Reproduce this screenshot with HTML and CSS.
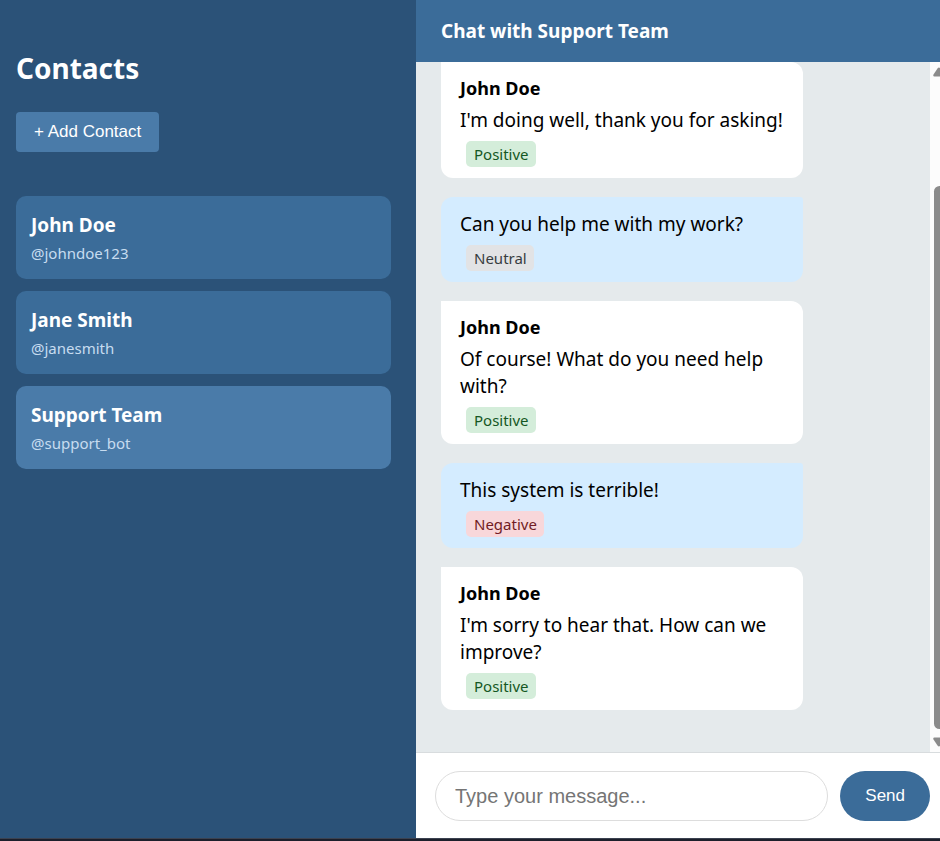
FILE: index.html
```html
<!DOCTYPE html>
<html lang="en">
<head>
<meta charset="utf-8">
<meta name="viewport" content="width=device-width, initial-scale=1">
<title>Chat with Support Team</title>
<link rel="stylesheet" href="styles.css">
</head>
<body>
<div class="app">
  <aside class="sidebar">
    <h1 class="sidebar-title">Contacts</h1>
    <button class="add-contact" type="button">+ Add Contact</button>
    <nav class="contacts">
      <button class="contact" type="button"><span class="contact-name">John Doe</span><span class="contact-handle">@johndoe123</span></button>
      <button class="contact" type="button"><span class="contact-name">Jane Smith</span><span class="contact-handle">@janesmith</span></button>
      <button class="contact active" type="button"><span class="contact-name">Support Team</span><span class="contact-handle">@support_bot</span></button>
    </nav>
  </aside>
  <main class="chat">
    <header class="chat-header"><h2 class="chat-title">Chat with Support Team</h2></header>
    <div class="chat-body">
      <div class="messages">
        <article class="message received">
          <strong class="sender">John Doe</strong>
          <p class="text">I'm doing well, thank you for asking!</p>
          <span class="badge positive">Positive</span>
        </article>
        <article class="message sent">
          <p class="text">Can you help me with my work?</p>
          <span class="badge neutral">Neutral</span>
        </article>
        <article class="message received">
          <strong class="sender">John Doe</strong>
          <p class="text">Of course! What do you need help with?</p>
          <span class="badge positive">Positive</span>
        </article>
        <article class="message sent">
          <p class="text">This system is terrible!</p>
          <span class="badge negative">Negative</span>
        </article>
        <article class="message received">
          <strong class="sender">John Doe</strong>
          <p class="text">I'm sorry to hear that. How can we improve?</p>
          <span class="badge positive">Positive</span>
        </article>
      </div>
      <div class="scrollbar" aria-hidden="true">
        <svg class="arrow" viewBox="0 0 12 10"><path d="M1.5 9.5Q-.3 9.500 .5 7.500L4.500 1.500Q6-.5 7.500 1.500L11.500 7.500Q12.300 9.500 10.500 9.500Z"/></svg>
        <div class="track"><div class="thumb"></div></div>
        <svg class="arrow" viewBox="0 0 12 10"><path d="M1.500.5Q-.3.5 .5 2.500L4.500 8.500Q6 10.500 7.500 8.500L11.500 2.500Q12.300.5 10.500.5Z"/></svg>
      </div>
    </div>
    <form class="composer">
      <input class="composer-input" type="text" placeholder="Type your message..." aria-label="Message">
      <button class="send" type="button">Send</button>
    </form>
  </main>
</div>
<footer class="bottom-edge"></footer>
</body>
</html>
```
FILE: styles.css
```css
* { box-sizing: border-box; }

body {
  display: flex;
  flex-direction: column;
  height: 100vh;
  margin: 0;
  overflow: hidden;
  font-family: "Segoe UI", "Noto Sans", sans-serif;
  color: #000;
}

h1, h2, p { margin: 0; }

button, input { font-family: "Liberation Sans", Arial, sans-serif; }

.app {
  display: flex;
  flex: 1;
  min-height: 0;
}

.sidebar {
  flex: 0 0 416px;
  padding: 48px 25px 24px 16px;
  background: #2b5278;
  color: #fff;
}

.sidebar-title {
  font-size: 28px;
  line-height: 40px;
}

.add-contact {
  display: block;
  height: 40px;
  margin: 24px 0 44px;
  padding: 0 18px;
  border: 0;
  border-radius: 4px;
  background: #4a7ba9;
  color: #fff;
  font-size: 17px;
}

.contacts {
  display: flex;
  flex-direction: column;
  gap: 12px;
}

.contact {
  display: flex;
  flex-direction: column;
  padding: 15px 15px 13px;
  border: 0;
  border-radius: 10px;
  background: #3b6c99;
  color: #fff;
  font-family: "Segoe UI", "Noto Sans", sans-serif;
  text-align: left;
}

.contact.active { background: #4a7ba9; }

.contact-name {
  font-size: 19px;
  font-weight: 700;
  line-height: 29px;
}

.contact-handle {
  color: #c7dcf0;
  font-size: 15px;
  line-height: 26px;
}

.chat {
  display: flex;
  flex: 1;
  flex-direction: column;
  min-width: 0;
}

.chat-header {
  padding: 17px 25px;
  background: #3b6c99;
  color: #fff;
}

.chat-title {
  font-size: 19px;
  line-height: 28px;
}

.chat-body {
  display: flex;
  flex: 1;
  min-height: 0;
  background: #e5eaec;
}

.messages {
  display: flex;
  flex: 1;
  flex-direction: column;
  align-items: flex-start;
  gap: 19px;
  min-width: 0;
  padding: 0 25px;
  overflow: hidden;
}

.message {
  flex: none;
  width: 78%;
  padding: 14px 19px 11px;
  border-radius: 12px;
}

.received {
  border-top-left-radius: 0;
  background: #fff;
}

.sent {
  border-top-right-radius: 3px;
  background: #d4ecff;
}

.sender {
  display: block;
  margin-bottom: 7px;
  font-size: 18px;
  line-height: 24px;
}

.text {
  font-size: 19px;
  line-height: 27px;
}

.badge {
  display: block;
  width: fit-content;
  margin: 7px 0 0 6px;
  padding: 0 7px 0 8px;
  border-radius: 5px;
  font-size: 15px;
  line-height: 26px;
}

.positive { background: #d4edda; color: #155724; }
.neutral { background: #e2e3e5; color: #383d41; }
.negative { background: #f8d7da; color: #721c24; }

.scrollbar {
  display: flex;
  flex: 0 0 10px;
  flex-direction: column;
  padding: 5px 0 5px 3px;
  overflow: hidden;
  background: #fcfcfc;
}

.arrow {
  flex: none;
  width: 12px;
  height: 10px;
  fill: #8b8b8b;
}

.track {
  flex: 1;
  width: 12px;
  padding: 109px 0 8px 1px;
}

.thumb {
  height: 100%;
  border-radius: 6px;
  background: #8b8b8b;
}

.composer {
  display: flex;
  gap: 12px;
  padding: 18px 10px 17px 19px;
  border-top: 1px solid #d8dcde;
  background: #fff;
}

.composer-input {
  flex: 1;
  min-width: 0;
  height: 50px;
  padding: 0 19px;
  border: 1px solid #ddd;
  border-radius: 25px;
  background: #fff;
  font-size: 20px;
}

.composer-input::placeholder { color: #757575; }

.send {
  height: 50px;
  padding: 0 25px;
  border: 0;
  border-radius: 25px;
  background: #3b6c99;
  color: #fff;
  font-size: 17px;
}

.bottom-edge {
  flex: none;
  height: 3px;
  border-top: 1px solid #3b4250;
  background: #1c1f2b;
}
```
